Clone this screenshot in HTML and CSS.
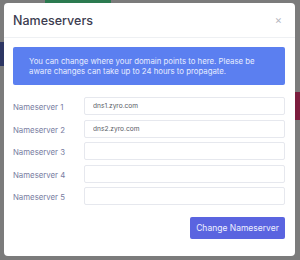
FILE: index.html
```html
<!DOCTYPE html>
<html lang="en">
<head>
    <meta charset="UTF-8">
    <meta name="viewport" content="width=device-width, initial-scale=1.0">
    <title>Nameservers</title>
    <link rel="stylesheet" href="styles.css">
</head>
<body>
    <div class="page-behind">
        <div class="behind-green"></div>
        <div class="behind-navy"></div>
        <div class="behind-red"></div>
    </div>

    <div class="modal">
        <div class="modal-header">
            <h2 class="modal-title">Nameservers</h2>
            <span class="close-button">×</span>
        </div>
        <div class="modal-body">
            <div class="alert">
                You can change where your domain points to here. Please be aware changes can take up to 24 hours to propagate.
            </div>
            <div class="ns-form">
                <label class="ns-label">Nameserver 1</label>
                <input class="ns-input" type="text" value="dns1.zyro.com">
                <label class="ns-label">Nameserver 2</label>
                <input class="ns-input" type="text" value="dns2.zyro.com">
                <label class="ns-label">Nameserver 3</label>
                <input class="ns-input" type="text">
                <label class="ns-label">Nameserver 4</label>
                <input class="ns-input" type="text">
                <label class="ns-label">Nameserver 5</label>
                <input class="ns-input" type="text">
            </div>
            <div class="form-actions">
                <button class="submit-button">Change Nameserver</button>
            </div>
        </div>
    </div>
</body>
</html>
```

FILE: styles.css
```css
* { margin: 0; padding: 0; box-sizing: border-box; }

body {
    font-family: 'Inter', 'Open Sans', sans-serif;
    background: #7b7b7b;
    width: 300px;
    height: 260px;
    overflow: hidden;
    padding: 3px 5px 0 4px;
}

.page-behind {
    position: absolute;
    top: 0;
    left: 0;
    width: 300px;
    height: 260px;
}

.behind-green {
    position: absolute;
    top: 0;
    left: 45px;
    width: 66px;
    height: 3px;
    background: #2c7a50;
}

.behind-navy {
    position: absolute;
    top: 42px;
    left: 0;
    width: 4px;
    height: 24px;
    background: #2d3663;
}

.behind-red {
    position: absolute;
    top: 92px;
    left: 295px;
    width: 5px;
    height: 28px;
    background: #7c1e3e;
}

.modal {
    position: relative;
    width: 291px;
    height: 253px;
    background: #ffffff;
    border-radius: 4px;
}

.modal-header {
    display: flex;
    justify-content: space-between;
    align-items: center;
    height: 35px;
    padding: 0 13px 0 9px;
    border-bottom: 1px solid #eef0f3;
}

.modal-title {
    font-size: 12.5px;
    font-weight: 500;
    color: #3c3c50;
}

.close-button {
    font-size: 11px;
    color: #b5b7bf;
}

.modal-body {
    padding: 9px 10px 0 9px;
}

.alert {
    background: #5b7ff0;
    color: #e6ecff;
    font-size: 7.8px;
    line-height: 10px;
    padding: 9px 16px 9px 16px;
    border-radius: 2px;
    height: 38px;
}

.ns-form {
    display: grid;
    grid-template-columns: 71px 1fr;
    grid-auto-rows: 18px;
    row-gap: 4.5px;
    align-items: center;
    margin-top: 12px;
}

.ns-label {
    font-size: 7.8px;
    color: #777c9f;
    padding-top: 2px;
}

.ns-input {
    height: 18px;
    border: 1px solid #e6e8ee;
    border-radius: 2px;
    padding: 0 8px;
    font-family: inherit;
    font-size: 6.6px;
    color: #585c66;
    outline: none;
}

.form-actions {
    display: flex;
    justify-content: flex-end;
    margin-top: 12px;
}

.submit-button {
    width: 95px;
    height: 22px;
    background: #5a64e0;
    color: #eef0ff;
    border: none;
    border-radius: 2px;
    font-family: inherit;
    font-size: 8.5px;
}
```
